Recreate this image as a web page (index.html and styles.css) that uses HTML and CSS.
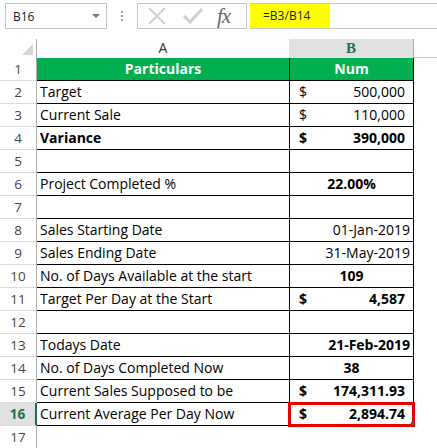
FILE: index.html
```html
<!DOCTYPE html>
<html>
<head>
<meta charset="utf-8">
<link rel="stylesheet" href="styles.css">
</head>
<body>
<div class="toolbar">
  <div class="namebox"><span class="name">B16</span><span class="drop"></span></div>
  <div class="dots"><i></i><i></i><i></i></div>
  <div class="fbuttons">
    <svg class="ic-x" width="20" height="18" viewBox="0 0 20 18"><path d="M2 1 L18 17 M18 1 L2 17" stroke="#cfcfcf" stroke-width="2" fill="none"/></svg>
    <svg class="ic-ok" width="20" height="18" viewBox="0 0 20 18"><path d="M1 9 L7 15 L19 2" stroke="#cfcfcf" stroke-width="3" fill="none"/></svg>
    <span class="fx">fx</span>
  </div>
  <div class="formula"><span class="ftext">=B3/B14</span></div>
</div>
<div class="colheads">
  <div class="corner"><span class="tri"></span></div>
  <div class="ch cha">A</div>
  <div class="ch chb">B</div>
  <div class="ch chrest"></div>
</div>
<div class="sheet">
  <div class="rn">1</div><div class="c a hdr">Particulars</div><div class="c b hdr center">Num</div><div class="rest"></div>
  <div class="rn">2</div><div class="c a">Target</div><div class="c b acc"><span>$</span><span>500,000</span></div><div class="rest"></div>
  <div class="rn">3</div><div class="c a">Current Sale</div><div class="c b acc"><span>$</span><span>110,000</span></div><div class="rest"></div>
  <div class="rn">4</div><div class="c a bold">Variance</div><div class="c b acc bold"><span>$</span><span>390,000</span></div><div class="rest"></div>
  <div class="rn">5</div><div class="c a"></div><div class="c b"></div><div class="rest"></div>
  <div class="rn">6</div><div class="c a">Project Completed %</div><div class="c b center bold">22.00%</div><div class="rest"></div>
  <div class="rn">7</div><div class="c a"></div><div class="c b"></div><div class="rest"></div>
  <div class="rn">8</div><div class="c a">Sales Starting Date</div><div class="c b right">01-Jan-2019</div><div class="rest"></div>
  <div class="rn">9</div><div class="c a">Sales Ending Date</div><div class="c b right">31-May-2019</div><div class="rest"></div>
  <div class="rn">10</div><div class="c a">No. of Days Available at the start</div><div class="c b center bold">109</div><div class="rest"></div>
  <div class="rn">11</div><div class="c a">Target Per Day at the Start</div><div class="c b acc bold"><span>$</span><span>4,587</span></div><div class="rest"></div>
  <div class="rn">12</div><div class="c a"></div><div class="c b"></div><div class="rest"></div>
  <div class="rn">13</div><div class="c a">Todays Date</div><div class="c b right bold">21-Feb-2019</div><div class="rest"></div>
  <div class="rn">14</div><div class="c a">No. of Days Completed Now</div><div class="c b center bold">38</div><div class="rest"></div>
  <div class="rn">15</div><div class="c a">Current Sales Supposed to be</div><div class="c b acc bold"><span>$</span><span>174,311.93</span></div><div class="rest"></div>
  <div class="rn sel">16</div><div class="c a">Current Average Per Day Now</div><div class="c b acc bold active"><span>$</span><span>2,894.74</span><span class="redbox"></span><span class="handle"></span></div><div class="rest"></div>
  <div class="rn">17</div><div class="e"></div><div class="e"></div><div class="rest"></div>
</div>
</body>
</html>
```
FILE: styles.css
```css
* { box-sizing: border-box; }
html, body { margin: 0; padding: 0; background: #fff; overflow: hidden; }
body { width: 437px; height: 448px; font-family: "Open Sans", "Liberation Sans", sans-serif; color: #000; }

.toolbar { height: 39px; display: flex; align-items: flex-start; padding: 3px 0 0 5px; }
.namebox { width: 102px; height: 26px; border: 1px solid #c6c6c6; display: flex; align-items: center; justify-content: space-between; padding: 0 6px 0 7px; }
.name { font-size: 12px; color: #222; }
.drop { width: 0; height: 0; border-left: 4px solid transparent; border-right: 4px solid transparent; border-top: 4px solid #7a7a7a; }
.dots { width: 30px; height: 26px; display: flex; flex-direction: column; align-items: center; justify-content: center; gap: 2px; }
.dots i { display: block; width: 2px; height: 2px; background: #a0a0a0; }
.fbuttons { width: 110px; height: 26px; border: 1px solid #c6c6c6; display: flex; align-items: center; padding-left: 9px; }
.ic-x { margin-right: 16px; }
.ic-ok { margin-right: 14px; }
.fx { font-family: "Liberation Serif", serif; font-style: italic; font-size: 21px; color: #666; line-height: 1; letter-spacing: -1px; }
.formula { flex: 1; height: 26px; margin-left: 3px; border-top: 1px solid #c6c6c6; border-bottom: 1px solid #c6c6c6; display: flex; }
.ftext { width: 80px; height: 24px; background: #ffff00; font-size: 12px; padding-left: 13px; line-height: 24px; color: #222; }

.colheads { height: 19px; display: grid; grid-template-columns: 37px 252px 125px 1fr; }
.corner { border-right: 1px solid #ababab; position: relative; }
.tri { position: absolute; left: 22px; top: 5px; width: 0; height: 0; border-left: 11px solid transparent; border-bottom: 11px solid #d4d4d4; }
.ch { font-size: 14px; text-align: center; line-height: 18px; border-bottom: 1px solid #c8c8c8; color: #333; }
.chb { background: #e1e1e1; border-right: 1px solid #ababab; font-family: "Liberation Serif", serif; font-weight: bold; font-size: 15px; color: #217346; border-bottom: none; }
.cha { border-bottom: none; }

.sheet { display: grid; grid-template-columns: 37px 253px 124px 1fr; grid-auto-rows: 23px; }
.rn { border-right: 1px solid #ababab; border-bottom: 1px solid #dadada; font-size: 13.5px; color: #444; text-align: center; line-height: 22px; }
.rn.sel { background: #e1e1e1; border-right: 2px solid #217346; color: #217346; font-weight: bold; }
.c { border-right: 1px solid #000; border-bottom: 1px solid #000; font-size: 14px; line-height: 22px; white-space: nowrap; overflow: hidden; }
.a { padding-left: 3px; }
.b { position: relative; overflow: visible; }
.hdr { background: #00b050; color: #fff; font-weight: bold; text-align: center; padding: 0; }
.center { text-align: center; }
.right { text-align: right; padding-right: 3px; }
.bold { font-weight: bold; }
.acc { display: flex; justify-content: space-between; padding: 0 8px 0 9px; }
.redbox { position: absolute; left: -2px; right: -2px; top: -1px; bottom: -2px; border: 3px solid #ee0000; }
.handle { position: absolute; right: -1px; bottom: 0px; width: 3px; height: 3px; background: #217346; }
```
